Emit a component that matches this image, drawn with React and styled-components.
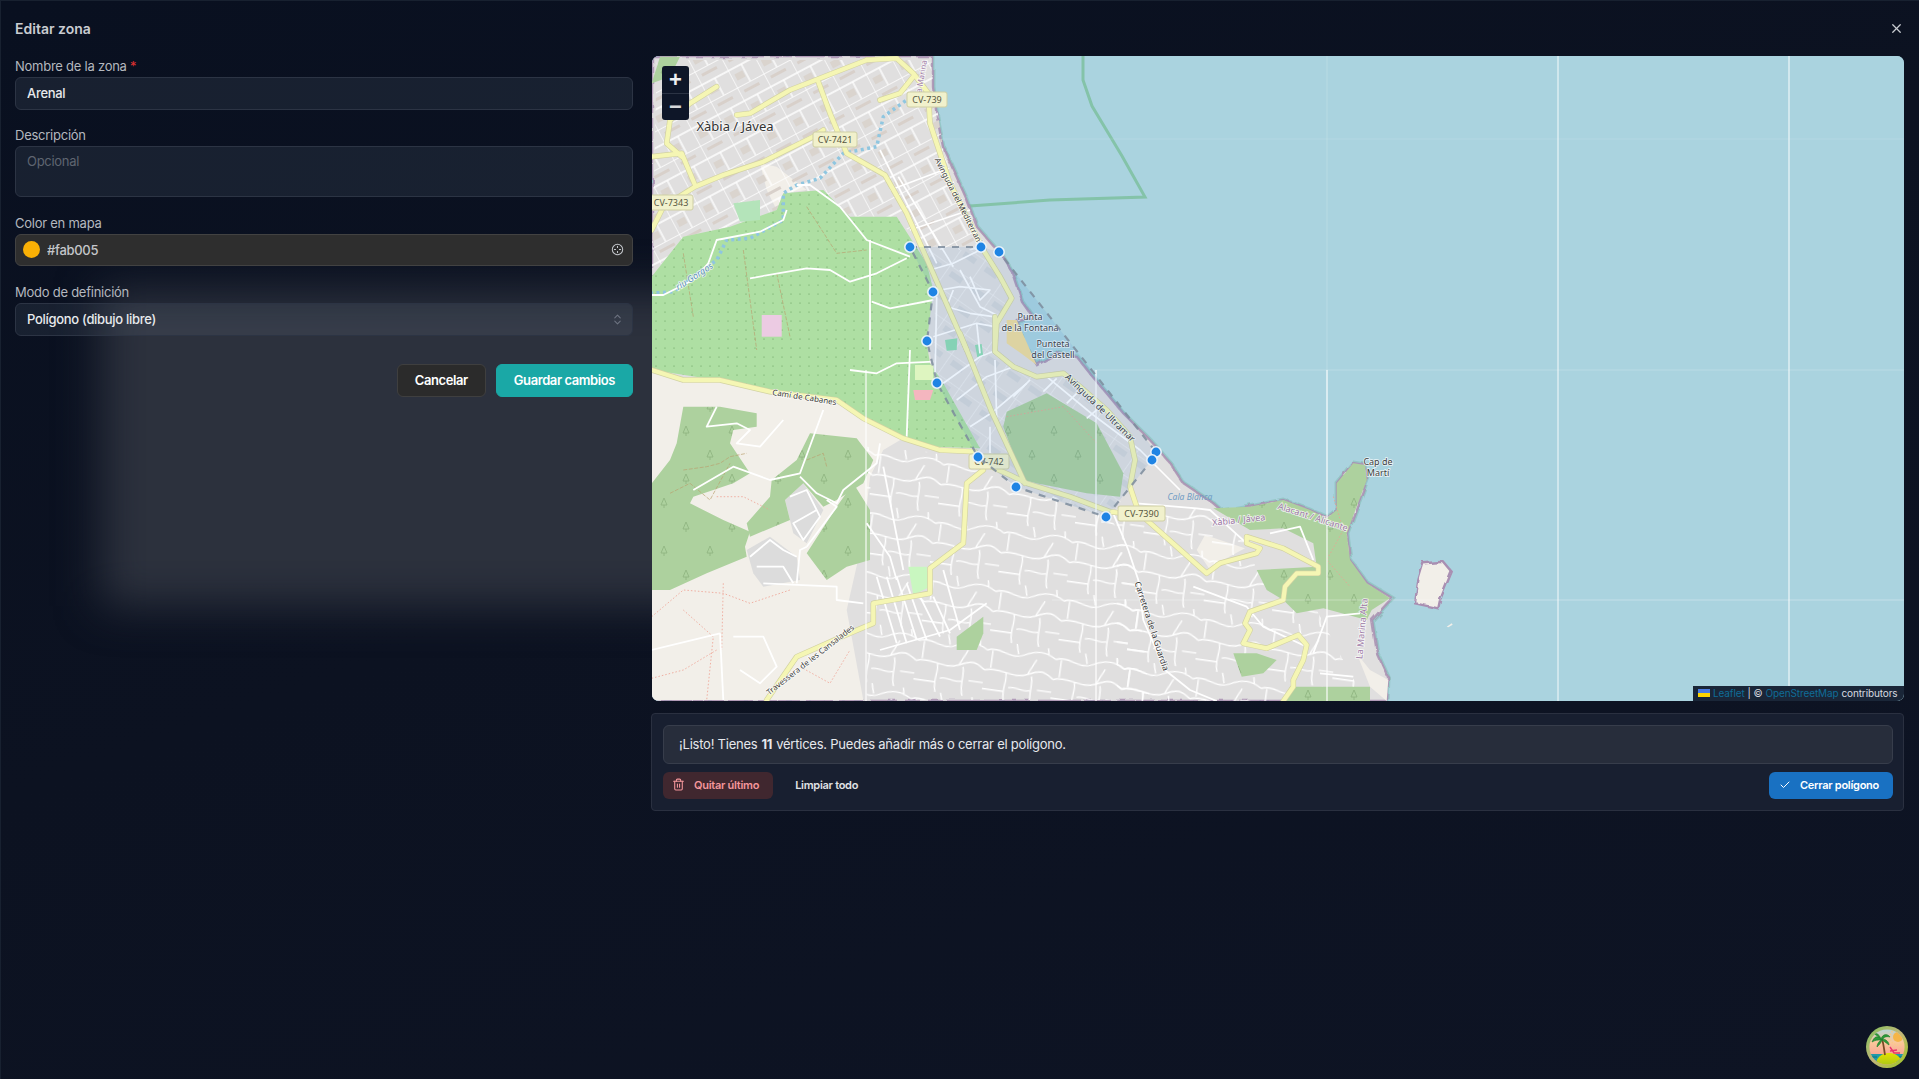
import React from "react";
import styled, { createGlobalStyle } from "styled-components";
import { X, ChevronsUpDown, Trash2, Check } from "lucide-react";

const GlobalStyle = createGlobalStyle`
  html, body {
    margin: 0;
    padding: 0;
    background: #0c1221;
  }
  * {
    box-sizing: border-box;
  }
  input, textarea, button {
    letter-spacing: -0.3px;
  }
`;

const Page = styled.div`
  position: relative;
  width: 1919px;
  height: 1079px;
  overflow: hidden;
  background: linear-gradient(160deg, #091020 0%, #0c1221 45%, #0e1424 100%);
  border: 1px solid #182130;
  border-bottom: none;
  border-right: none;
  font-family: Inter, "Liberation Sans", sans-serif;
  color: #dfe2e7;
`;

const Glow = styled.div`
  position: absolute;
  left: 100px;
  top: 290px;
  width: 620px;
  height: 315px;
  background: #2c313d;
  filter: blur(22px);
`;

const Content = styled.div`
  position: relative;
  padding: 0 14px 0 14px;
`;

const Header = styled.header`
  height: 55px;
  display: flex;
  align-items: center;
  justify-content: space-between;
  color: #c9ccd1;
`;

const Title = styled.h2`
  margin: 0;
  font-size: 14px;
  font-weight: 600;
`;

const CloseButton = styled.button`
  display: flex;
  padding: 0;
  margin-right: 1px;
  border: 0;
  background: none;
  color: #c9ccd1;
`;

const Body = styled.div`
  display: flex;
  align-items: flex-start;
  gap: 19px;
`;

const FormColumn = styled.div`
  width: 618px;
  flex: none;
  display: flex;
  flex-direction: column;
`;

const Field = styled.label`
  display: block;
  margin-bottom: 16px;

  &:first-child {
    margin-bottom: 15px;
  }
`;

const LabelText = styled.div`
  height: 21px;
  font-size: 13px;
  line-height: 21px;
  letter-spacing: -0.25px;
  color: #b4b8bf;
`;

const Required = styled.span`
  color: #e03131;
`;

const InputBox = styled.div`
  height: ${(p) => p.$height || 33}px;
  display: flex;
  align-items: ${(p) => (p.$multiline ? "flex-start" : "center")};
  padding: ${(p) => (p.$multiline ? "6px 8px 0 11px" : "0 8px 1px 11px")};
  border: 1px solid ${(p) => (p.$solid ? "#424242" : "#2c3444")};
  border-radius: 6px;
  background: ${(p) => (p.$solid ? "#2e2e2e" : "rgba(148, 163, 184, 0.11)")};
`;

const TextInput = styled.input`
  flex: 1;
  min-width: 0;
  padding: 0;
  border: 0;
  outline: 0;
  background: none;
  font: 500 13px Inter, "Liberation Sans", sans-serif;
  color: ${(p) => p.$color || "#e8eaed"};

  &::placeholder {
    color: #5f6570;
  }
`;

const TextArea = styled.textarea`
  flex: 1;
  height: 36px;
  padding: 0;
  border: 0;
  outline: 0;
  resize: none;
  background: none;
  font: 400 13px Inter, "Liberation Sans", sans-serif;

  &::placeholder {
    color: #5f6570;
  }
`;

const Swatch = styled.span`
  width: 17px;
  height: 17px;
  margin: 0 7px 0 -4px;
  flex: none;
  border-radius: 50%;
  background: ${(p) => p.$color};
`;

const FormActions = styled.div`
  display: flex;
  justify-content: flex-end;
  gap: 10px;
  margin-top: 12px;
`;

const FormButton = styled.button`
  height: 33px;
  padding: 0 17px 2px;
  border: 1px solid ${(p) => (p.$primary ? "#1aa8a6" : "#3f3f3f")};
  border-radius: 6px;
  background: ${(p) => (p.$primary ? "#1aa8a6" : "#2b2b2b")};
  color: #fff;
  font: 600 13px Inter, "Liberation Sans", sans-serif;
  letter-spacing: -0.42px;
`;

const MapColumn = styled.div`
  width: 1252px;
  flex: none;
  display: flex;
  flex-direction: column;
  gap: 12px;
`;

const MapFrame = styled.div`
  position: relative;
  height: 645px;
  overflow: hidden;
  border-radius: 7px;
  background: #aad3df;
`;

const MapSvg = styled.svg`
  display: block;
  font-family: "Noto Sans", "DejaVu Sans", sans-serif;
`;

const MapLabel = styled.text`
  font-size: ${(p) => p.$size || 9}px;
  font-style: ${(p) => (p.$italic ? "italic" : "normal")};
  fill: ${(p) => p.$color || "#3d3d3d"};
  stroke: ${(p) => p.$halo || "rgba(255, 255, 255, 0.75)"};
  stroke-width: 1.6px;
  paint-order: stroke;
  text-anchor: middle;
`;

const ZoomControl = styled.div`
  position: absolute;
  left: 10px;
  top: 10px;
  width: 27px;
  border-radius: 3px;
  overflow: hidden;
  background: #0e1628;
`;

const ZoomButton = styled.div`
  height: 27px;
  display: flex;
  align-items: center;
  justify-content: center;
  color: ${(p) => (p.$muted ? "#d5d7db" : "#eef0f3")};
  font: 700 22px "Liberation Sans", sans-serif;

  & + & {
    border-top: 1px solid #2b3344;
  }
`;

const Attribution = styled.div`
  position: absolute;
  right: 0;
  bottom: 0;
  height: 15px;
  width: 211px;
  padding: 0 0 1px 5px;
  display: flex;
  align-items: center;
  gap: 3px;
  background: #1a2638;
  font-size: 10px;
  letter-spacing: -0.12px;
  color: #d8dbe0;
  white-space: nowrap;
`;

const AttrLink = styled.span`
  color: #0f6c97;
`;

const DrawPanel = styled.section`
  height: 98px;
  margin-left: -1px;
  padding: 11px 10px 0 11px;
  border: 1px solid #2a3040;
  border-radius: 4px;
  background: #181f30;
`;

const Notice = styled.div`
  height: 39px;
  display: flex;
  align-items: center;
  padding: 0 0 2px 15px;
  border: 1px solid #373d4b;
  border-radius: 6px;
  background: #272d3b;
  font-size: 13px;
  letter-spacing: -0.23px;
  color: #e6e8ec;
`;

const Strong = styled.strong`
  margin: 0 4px;
  font-weight: 700;
`;

const PanelActions = styled.div`
  display: flex;
  align-items: center;
  margin-top: 8px;
`;

const PanelButton = styled.button`
  height: 27px;
  display: flex;
  align-items: center;
  gap: 9px;
  padding: 0 14px 2px ${(p) => p.$padLeft || 14}px;
  margin-left: ${(p) => (p.$push ? "auto" : p.$gap || "0")};
  border: 0;
  border-radius: 6px;
  background: ${(p) => p.$bg || "transparent"};
  color: ${(p) => p.$color || "#e0e2e6"};
  font: 600 11px Inter, "Liberation Sans", sans-serif;
  letter-spacing: -0.27px;
`;

const AvatarBadge = styled.div`
  position: absolute;
  right: 10px;
  bottom: 10px;
  width: 44px;
  height: 44px;
`;

// the coordinates were read from 3x crops, so each list says which crop it came from
const crop = (ox, oy) => (text) =>
  text
    .trim()
    .split(/\s+/)
    .map((pair) => {
      const [x, y] = pair.split(",").map(Number);
      return `${(x / 3 + ox).toFixed(1)},${(y / 3 + oy).toFixed(1)}`;
    })
    .join(" ");

const z5 = crop(-2, -6);
const z6 = crop(228, 164);
const z7 = crop(-2, 294);
const z8 = crop(398, 364);

const LAND =
  "0,0 281,0 281,31 285,61 291,91 315,144 325,171 351,201 361,217 371,247 381,261 365,264 370,285 385,309 405,297 425,301 441,321 471,357 498,384 518,407 531,427 561,447 571,456 598,451 631,444 658,454 675,462 685,454 685,427 701,407 713,409 715,424 695,477 698,504 715,527 740,542 720,564 725,597 736,621 735,645 0,645";

const ORCHARD = [
  z5("5,680 100,560 240,530 380,480 400,430 520,420 600,500 740,500 830,640 850,720 830,880 840,940 880,1000 990,1195 850,1190 760,1165 640,1105 570,1060 360,1025 200,990 5,960"),
];

const FORESTS = [
  z7("5,400 60,330 80,280 100,170 210,170 320,190 320,230 250,240 240,280 300,370 250,400 130,440 120,460 220,510 300,545 285,590 290,620 170,670 60,720 5,720"),
  z7("290,520 360,440 365,390 440,330 480,250 620,265 670,330 640,400 560,450 520,470 460,400 405,450 420,510 300,560"),
  z7("470,610 560,470 610,400 660,480 660,630 590,650 530,690"),
  z7("920,860 1000,800 1000,850 980,900 920,900"),
  z6("380,575 500,520 650,610 730,760 720,830 620,820 470,790 430,780 370,620"),
  z8("490,265 600,260 700,240 780,270 830,295 860,270 860,190 910,130 945,135 950,180 890,340 900,420 950,490 1020,535 965,570 950,600 820,565 740,580 700,540 650,510 620,450 800,440 790,370 700,325 600,330"),
  z8("550,700 620,700 680,720 640,760 575,770"),
  z8("720,800 960,800 960,843 700,843"),
  z5("5,100 30,20 90,20 60,80"),
];

const TAN = [
  z7("5,60 100,90 210,90 360,125 560,150 640,205 760,265 700,300 660,380 640,560 590,780 640,1050 5,1050"),
  z5("330,340 380,350 470,420 400,430 380,480 350,420"),
  z8("440,390 465,345 585,385 510,425 480,450"),
  z8("920,700 960,750 1015,780 1010,843 960,800"),
];

const RESIDENTIAL_SPOTS = [
  z7("290,600 360,560 440,620 450,690 340,710 310,670"),
  z7("405,450 460,400 520,480 470,580 430,550"),
];

const SOUTH_STREETS = z7("650,290 880,310 1000,370 1130,410 1380,500 1450,620 1500,1050 650,1050");
const EAST_STREETS = z8("200,260 350,260 480,270 590,370 620,450 690,560 800,570 900,760 950,843 200,843");
const TOWN_STREETS = z5("20,30 640,30 840,30 880,300 960,540 1010,600 820,600 740,500 600,500 520,420 400,430 380,480 240,530 100,560 5,680");
const TOWN_INNER = z6("130,90 300,90 395,240 345,395 470,470 550,460 750,660 810,720 720,850 680,890 400,800 290,700 160,480 165,240");

const YELLOW_ROADS = [
  z5("650,30 740,25 790,70 835,130 840,220 870,310 900,400 960,520 1000,600 1050,680 1085,745 1040,820 1035,900"),
  z6("345,290 345,395 400,440 470,470 550,460 600,500 680,570 750,650 765,720 750,800 770,860 790,890"),
  z8("290,300 380,380 470,460 510,430 620,400 630,385 590,370 590,350 700,385 805,440 805,460 740,460 705,500 700,540 600,575 585,610 600,630 580,670 650,685 745,645 770,675 760,720 730,780 730,800 700,843"),
  z5("260,195 300,190 420,120 650,30"),
  z5("5,540 40,470 135,410 220,375 340,335 490,260 520,240"),
  z5("5,320 95,310 135,405"),
  z5("200,110 120,160 60,210 50,280 95,320"),
  z5("505,95 540,190 590,310 705,375 770,490 845,660 950,900"),
  z6("240,340 335,575 435,790"),
  z7("5,60 100,90 210,90 360,125 560,150 640,205 760,265 870,300 975,305"),
  z7("1000,360 950,400 940,580 840,655 840,730 670,760 670,820 610,845 440,920 350,1050"),
  z7("1000,340 1080,375 1130,400 1260,440 1380,485 1420,490"),
  z5("690,150 750,130 790,80"),
];

const WHITE_ROADS = [
  z8("190,280 235,390 265,480 280,600 345,750 420,810 500,843"),
  z5("300,685 470,655 540,660 600,695 680,670 770,625"),
  z5("660,570 660,900"),
  z5("665,755 720,775 850,750"),
  z5("440,405 480,405 570,470 650,570 780,620"),
  z5("0,735 40,735 130,690 175,640 200,570 330,545 400,510 410,480"),
  z7("450,380 500,430 560,460 580,420 680,340 690,280"),
  z7("470,590 560,470 530,450"),
  z7("130,420 250,350 360,390 450,370 520,180"),
  z7("210,850 5,900"),
  z7("210,850 220,1050"),
  z7("340,700 560,710 560,750 640,760"),
  z7("440,700 450,600 470,590"),
  z7("200,170 170,230 260,220 300,240 260,280 330,290 400,210"),
  z7("300,620 360,570 400,600 440,620"),
  z7("320,650 400,650 430,700"),
  z7("420,440 470,420 510,500 460,570 430,520 500,480"),
  z7("250,860 340,860 380,950 330,1000 270,960"),
  z7("780,0 770,260"),
  z7("600,60 680,70 740,40 850,35"),
  z7("700,350 760,660"),
  z7("650,520 720,620 740,690"),
  z7("680,680 740,880"),
  z7("710,680 770,880"),
  z7("740,680 800,870"),
  z7("770,700 830,870"),
  z7("810,740 870,860"),
  z7("850,740 900,850"),
  z7("880,660 930,840"),
  z7("690,900 900,840 1010,760"),
  z8("260,250 440,265 480,270 590,370"),
  z8("660,340 750,320 790,420"),
  z8("790,700 830,590 930,580"),
  z8("810,760 910,770"),
  z8("430,500 590,560 640,620 770,680"),
];

const INNER_ROADS = [
  z6("150,150 220,130 300,90"),
  z6("180,210 240,200 330,210 300,240 270,170"),
  z6("160,350 290,310 345,320"),
  z6("190,490 300,410 350,390"),
  z6("230,540 320,470 400,440"),
  z6("270,620 340,575 440,490"),
  z6("345,420 350,600"),
  z6("330,620 330,700"),
  z6("290,310 300,400"),
  z6("220,210 200,260 270,280 340,290"),
  z6("450,480 400,530"),
  z6("500,470 640,585 780,690 900,810"),
  z6("530,475 490,515"),
  z6("590,520 560,550"),
  z6("650,570 620,595"),
  z6("170,230 165,470"),
  z6("240,150 300,260 360,290"),
  z5("745,380 910,650"),
  z5("690,300 860,640"),
  z5("720,420 880,360"),
  z5("780,540 960,480"),
];

const TRACKS = [
  z5("280,600 320,900"),
  z5("100,610 130,800"),
  z5("380,670 420,860"),
  z5("470,470 560,610 650,600"),
  z7("100,360 170,350 210,340 240,320 290,310"),
  z7("60,430 120,400 180,450 240,340"),
  z7("470,330 520,310 530,350"),
];

const FOOTPATHS = [
  z7("5,800 100,720 220,730 300,760 420,720"),
  z7("100,780 190,860 170,1050"),
  z7("220,700 215,900"),
  z7("5,985 100,960 200,900"),
  z7("200,440 280,440 360,480"),
  z7("1070,200 1240,170 1340,280"),
  z7("450,950 540,1000 600,900"),
  z8("850,230 880,330 830,420 900,500"),
];

const SEAMS = [
  { x1: 214, y1: 314, x2: 214, y2: 645, opacity: 0.9 },
  { x1: 444, y1: 314, x2: 444, y2: 645, opacity: 1 },
  { x1: 675, y1: 0, x2: 675, y2: 314, opacity: 0.15 },
  { x1: 675, y1: 314, x2: 675, y2: 645, opacity: 0.95 },
  { x1: 906, y1: 0, x2: 906, y2: 645, opacity: 0.75 },
  { x1: 1137, y1: 0, x2: 1137, y2: 645, opacity: 0.8 },
  { x1: 290, y1: 83, x2: 1252, y2: 83, opacity: 0.12 },
  { x1: 440, y1: 314, x2: 1252, y2: 314, opacity: 0.2 },
  { x1: 400, y1: 544, x2: 1252, y2: 544, opacity: 0.3 },
];

const VERTICES = [
  [258, 191],
  [329, 191],
  [347, 196],
  [504, 396],
  [500, 404],
  [454, 461],
  [364, 431],
  [326, 401],
  [285, 327],
  [275, 285],
  [281, 236],
];

const SHIELDS = [
  { x: 255, y: 36, w: 40, label: "CV-739" },
  { x: 161, y: 76, w: 44, label: "CV-7421" },
  { x: -3, y: 139, w: 44, label: "CV-7343" },
  { x: 317, y: 398, w: 40, label: "CV-742" },
  { x: 466, y: 450, w: 47, label: "CV-7390" },
];

const LABELS = [
  { text: "Punta", x: 378, y: 264 },
  { text: "de la Fontana", x: 378, y: 275 },
  { text: "Punteta", x: 401, y: 291 },
  { text: "del Castell", x: 401, y: 302 },
  { text: "Cap de", x: 726, y: 409 },
  { text: "Martí", x: 726, y: 420 },
  { text: "Avinguda del Mediterrani", x: 304, y: 146, rotate: 63, size: 8 },
  { text: "Avinguda de Ultramar", x: 446, y: 354, rotate: 44 },
  { text: "Camí de Cabanes", x: 152, y: 344, rotate: 9, size: 8 },
  { text: "Travessera de les Cansalades", x: 160, y: 606, rotate: -38, size: 8 },
  { text: "Carretera de la Guardia", x: 497, y: 571, rotate: 72, size: 8.5 },
  { text: "riu Gorgos", x: 44, y: 223, rotate: -33, color: "#5f90b8", italic: true },
  { text: "Cala Blanca", x: 538, y: 444, color: "#6f9cc4", italic: true, size: 8.5, halo: "none" },
  { text: "Xàbia / Jávea", x: 587, y: 467, rotate: -6, color: "#9d7aa6" },
  { text: "Alacant / Alicante", x: 660, y: 464, rotate: 18, color: "#9d7aa6" },
  { text: "La Marina Alta", x: 713, y: 573, rotate: -85, color: "#9d7aa6" },
  { text: "la Marina", x: 272, y: 22, rotate: -80, color: "#9d7aa6", size: 8 },
];

const MapDrawing = () => (
  <MapSvg width="1252" height="645" viewBox="0 0 1252 645">
    <defs>
      <filter id="coastWobble" x="-2%" y="-2%" width="104%" height="104%">
        <feTurbulence type="fractalNoise" baseFrequency="0.09" numOctaves="2" seed="4" />
        <feDisplacementMap in="SourceGraphic" scale="5" />
      </filter>
      <pattern id="orchardDots" width="9" height="9" patternUnits="userSpaceOnUse">
        <rect width="9" height="9" fill="#aedfa3" />
        <circle cx="4" cy="4" r="0.55" fill="#5f9a58" />
      </pattern>
      <pattern id="forestTrees" width="46" height="48" patternUnits="userSpaceOnUse">
        <rect width="46" height="48" fill="#add19e" />
        <path d="M12 10 l-3 7 h6 z M12 17 v3 M34 34 l-3 7 h6 z M34 41 v3" fill="none" stroke="#8db37e" strokeWidth="0.8" />
      </pattern>
      <pattern id="townGrid" width="30" height="34" patternUnits="userSpaceOnUse" patternTransform="rotate(-28)">
        <rect x="5" y="5" width="17" height="3" fill="#d8d0ca" />
        <rect x="4" y="21" width="9" height="7" fill="#dad4ce" />
        <path d="M0 0 H30 M0 0 V34 M15 15 V34 M0 15 H30" stroke="#fff" strokeWidth="1.3" />
      </pattern>
      <pattern id="innerGrid" width="26" height="24" patternUnits="userSpaceOnUse" patternTransform="rotate(35)">
        <rect x="5" y="4" width="14" height="6" fill="#c6ccd4" opacity="0.45" />
        <path d="M0 0 H26 M0 0 V24" stroke="#fff" strokeWidth="1.2" opacity="0.6" />
      </pattern>
      <pattern id="curvyStreets" width="96" height="82" patternUnits="userSpaceOnUse" patternTransform="rotate(8) scale(0.72)">
        <path
          d="M0 14 C18 6 34 24 52 14 S84 6 96 14 M8 14 V38 M0 42 C20 34 40 50 60 40 S84 34 96 42 M30 42 C34 54 26 66 32 82 M60 40 L70 18 M66 42 C70 56 64 68 70 82 M0 68 H30 M36 62 C46 58 56 66 66 62 M76 60 H96 M44 14 L40 0 M86 10 L84 0"
          fill="none"
          stroke="#fff"
          strokeWidth="1.9"
        />
      </pattern>
    </defs>

    <rect width="1252" height="645" fill="#aad3df" />
    <polyline points="431,0 431,24 440,50 470,100 493,141 398,144 318,150" fill="none" stroke="#84c3a9" strokeWidth="3" />

    <g filter="url(#coastWobble)">
      <polygon points={LAND} fill="#e0dfdf" stroke="#7fbcb0" strokeWidth="5" strokeOpacity="0.5" />
      <polygon points={LAND} fill="#e0dfdf" stroke="#a98fb2" strokeWidth="2.4" strokeOpacity="0.85" />
    </g>

    {TAN.map((points) => (
      <polygon key={points} points={points} fill="#f2efe9" />
    ))}
    {RESIDENTIAL_SPOTS.map((points) => (
      <polygon key={points} points={points} fill="#dcdcdc" />
    ))}

    <polygon points={TOWN_STREETS} fill="url(#townGrid)" />
    <polygon points={TOWN_INNER} fill="url(#innerGrid)" />
    <polygon points={SOUTH_STREETS} fill="url(#curvyStreets)" />
    <polygon points={EAST_STREETS} fill="url(#curvyStreets)" />

    {ORCHARD.map((points) => (
      <polygon key={points} points={points} fill="url(#orchardDots)" />
    ))}
    {FORESTS.map((points) => (
      <polygon key={points} points={points} fill="url(#forestTrees)" />
    ))}

    <polygon points={z6("380,300 410,300 470,435 430,405 380,370")} fill="#f1dd9c" />
    <polygon points={z7("790,120 850,120 840,150 795,150")} fill="#f4b6bf" />
    <polygon points={z7("795,45 850,45 850,90 795,90")} fill="#def5c0" />
    <polygon points={z7("775,650 830,650 840,710 790,735")} fill="#c9f7c0" />
    <polygon points={z5("335,795 395,795 395,860 335,860")} fill="#eccbe3" />
    <polygon points={z5("250,460 330,450 330,510 270,515")} fill="#b4e4ba" />
    <polygon points={z6("195,360 232,355 230,390 200,392")} fill="#8fdcb2" />
    <polygon points={z6("285,375 305,372 310,410 292,412")} fill="#8fdcb2" />
    <g filter="url(#coastWobble)">
      <polygon points={z8("1120,430 1180,425 1205,455 1170,540 1165,565 1095,550 1105,480")} fill="#f2efe9" stroke="#a98fb2" strokeWidth="2.4" />
    </g>
    <polygon points={z8("1190,620 1205,610 1208,614 1195,622")} fill="#f2efe9" />

    {TRACKS.map((points) => (
      <polyline key={points} points={points} fill="none" stroke="#b9a06e" strokeOpacity="0.75" strokeWidth="0.9" strokeDasharray="4 1.5" />
    ))}
    {FOOTPATHS.map((points) => (
      <polyline key={points} points={points} fill="none" stroke="#ef9f90" strokeOpacity="0.8" strokeWidth="1" strokeDasharray="1.5 2" />
    ))}

    <polyline
      points={z5("0,730 70,725 200,630 230,570 300,565 400,510 400,430 440,405 510,385 580,310 680,290 700,200 770,150")}
      fill="none"
      stroke="#8fc6e0"
      strokeWidth="3.5"
      strokeDasharray="3 3.5"
    />
    {WHITE_ROADS.map((points) => (
      <polyline key={points} points={points} fill="none" stroke="#fff" strokeWidth="1.8" strokeLinejoin="round" />
    ))}
    {INNER_ROADS.map((points) => (
      <polyline key={points} points={points} fill="none" stroke="#fff" strokeWidth="1.7" strokeLinejoin="round" />
    ))}
    {YELLOW_ROADS.map((points) => (
      <polyline key={points} points={points} fill="none" stroke="#d2d2a2" strokeWidth="5.6" strokeLinejoin="round" strokeLinecap="round" />
    ))}
    {YELLOW_ROADS.map((points) => (
      <polyline key={`${points}-fill`} points={points} fill="none" stroke="#f5f6b4" strokeWidth="4.3" strokeLinejoin="round" strokeLinecap="round" />
    ))}

    {SEAMS.map((seam) => (
      <line key={`${seam.x1}-${seam.y1}`} {...seam} stroke="#fff" strokeWidth="1.2" />
    ))}

    {LABELS.map((label) => (
      <MapLabel
        key={label.text}
        x={label.x}
        y={label.y}
        transform={label.rotate ? `rotate(${label.rotate} ${label.x} ${label.y})` : undefined}
        $size={label.size}
        $color={label.color}
        $italic={label.italic}
        $halo={label.halo}
      >
        {label.text}
      </MapLabel>
    ))}
    <MapLabel x="83" y="75" $size={13} $color="#333">
      Xàbia / Jávea
    </MapLabel>

    {SHIELDS.map((shield) => (
      <g key={shield.label}>
        <rect x={shield.x} y={shield.y} width={shield.w} height="15" rx="2" fill="#f1f1cc" stroke="#cfcfa4" />
        <MapLabel x={shield.x + shield.w / 2} y={shield.y + 11} $size={9} $color="#56563f" $halo="none">
          {shield.label}
        </MapLabel>
      </g>
    ))}

    <polygon
      points={VERTICES.map((point) => point.join(",")).join(" ")}
      fill="#2f80d8"
      fillOpacity="0.1"
      stroke="#7d8c9c"
      strokeOpacity="0.85"
      strokeWidth="2.2"
      strokeDasharray="7 7"
    />
    {VERTICES.map(([cx, cy]) => (
      <circle key={`${cx}-${cy}`} cx={cx} cy={cy} r="5.2" fill="#1f84e4" stroke="#e9f2fa" strokeWidth="1.6" />
    ))}
  </MapSvg>
);

const TropicalAvatar = () => (
  <svg width="44" height="44" viewBox="0 0 44 44">
    <defs>
      <linearGradient id="avatarSky" x1="0" y1="0" x2="0" y2="1">
        <stop offset="0" stopColor="#9fd8ea" />
        <stop offset="0.4" stopColor="#fbc79a" />
        <stop offset="0.7" stopColor="#f7a494" />
      </linearGradient>
      <linearGradient id="avatarRing" x1="0" y1="0" x2="1" y2="1">
        <stop offset="0" stopColor="#7fc25a" />
        <stop offset="0.5" stopColor="#c2b679" />
        <stop offset="1" stopColor="#9ac81c" />
      </linearGradient>
      <linearGradient id="avatarIsland" x1="0" y1="0" x2="0" y2="1">
        <stop offset="0" stopColor="#e3e000" />
        <stop offset="1" stopColor="#7fb62a" />
      </linearGradient>
      <clipPath id="avatarClip">
        <circle cx="22" cy="22" r="17.6" />
      </clipPath>
    </defs>
    <circle cx="22" cy="22" r="21" fill="url(#avatarRing)" />
    <g clipPath="url(#avatarClip)">
      <rect width="44" height="44" fill="url(#avatarSky)" />
      <circle cx="33" cy="12" r="5" fill="#f5b548" />
      <circle cx="33" cy="12" r="8" fill="none" stroke="#f7c98a" strokeWidth="1.5" strokeDasharray="1.5 1.5" />
      <rect x="0" y="29" width="44" height="8" fill="#1e9aa8" />
      <path d="M1 32 H12 M32 32 H44" stroke="#0f6d80" strokeWidth="1" />
      <ellipse cx="24" cy="39" rx="13" ry="11" fill="url(#avatarIsland)" />
      <path d="M20 30 C19 25 19 20 17 14" fill="none" stroke="#7a4a24" strokeWidth="1.8" />
      <path d="M16 14 C12 10 9 12 7 17 C10 15 13 15 16 15 Z M16 14 C18 8 23 9 25 12 C21 11 19 12 17 15 Z M16 14 C14 8 10 8 9 9 M17 14 C21 14 24 17 24 20 C21 18 19 16 17 15 Z M16 15 C13 17 12 20 12 22 C14 20 16 18 17 15 Z" fill="#2f9a3a" stroke="#1f7e2e" strokeWidth="0.6" />
      <path d="M25 22 L29 28 H35 M25 26 L32 25" fill="none" stroke="#e8356d" strokeWidth="1.4" />
    </g>
  </svg>
);

const PickerIcon = () => (
  <svg width="13" height="13" viewBox="0 0 14 14" fill="none" stroke="#c2c5ca" strokeWidth="1.1">
    <circle cx="7" cy="7" r="5.6" />
    <path d="M7 3.2 V5.4 M7 8.6 V10.8 M3.2 7 H5.4 M8.6 7 H10.8" />
  </svg>
);

const UkraineFlag = () => (
  <svg width="12" height="8" viewBox="0 0 12 8">
    <rect width="12" height="4" fill="#4c7be1" />
    <rect y="4" width="12" height="4" fill="#ffd500" />
  </svg>
);

export default function App() {
  return (
    <>
      <GlobalStyle />
      <Page>
        <Glow />
        <Content>
          <Header>
            <Title>Editar zona</Title>
            <CloseButton aria-label="Cerrar">
              <X size={15} />
            </CloseButton>
          </Header>

          <Body>
            <FormColumn>
              <Field>
                <LabelText>
                  Nombre de la zona <Required>*</Required>
                </LabelText>
                <InputBox>
                  <TextInput defaultValue="Arenal" />
                </InputBox>
              </Field>

              <Field>
                <LabelText>Descripción</LabelText>
                <InputBox $height={51} $multiline>
                  <TextArea placeholder="Opcional" />
                </InputBox>
              </Field>

              <Field>
                <LabelText>Color en mapa</LabelText>
                <InputBox $height={32} $solid>
                  <Swatch $color="#fab005" />
                  <TextInput defaultValue="#fab005" $color="#c4c6ca" />
                  <PickerIcon />
                </InputBox>
              </Field>

              <Field>
                <LabelText>Modo de definición</LabelText>
                <InputBox>
                  <TextInput defaultValue="Polígono (dibujo libre)" />
                  <ChevronsUpDown size={13} color="#6d7380" />
                </InputBox>
              </Field>

              <FormActions>
                <FormButton>Cancelar</FormButton>
                <FormButton $primary>Guardar cambios</FormButton>
              </FormActions>
            </FormColumn>

            <MapColumn>
              <MapFrame>
                <MapDrawing />
                <ZoomControl>
                  <ZoomButton>+</ZoomButton>
                  <ZoomButton $muted>−</ZoomButton>
                </ZoomControl>
                <Attribution>
                  <UkraineFlag />
                  <AttrLink>Leaflet</AttrLink>| ©<AttrLink>OpenStreetMap</AttrLink>contributors
                </Attribution>
              </MapFrame>

              <DrawPanel>
                <Notice>
                  ¡Listo! Tienes<Strong>11</Strong>vértices. Puedes añadir más o cerrar el polígono.
                </Notice>
                <PanelActions>
                  <PanelButton $padLeft={9} $bg="#40272f" $color="#f4969b">
                    <Trash2 size={13} />
                    Quitar último
                  </PanelButton>
                  <PanelButton $gap="8px">Limpiar todo</PanelButton>
                  <PanelButton $push $padLeft={10} $bg="#1971c2" $color="#fff">
                    <Check size={12} />
                    Cerrar polígono
                  </PanelButton>
                </PanelActions>
              </DrawPanel>
            </MapColumn>
          </Body>
        </Content>
        <AvatarBadge>
          <TropicalAvatar />
        </AvatarBadge>
      </Page>
    </>
  );
}
